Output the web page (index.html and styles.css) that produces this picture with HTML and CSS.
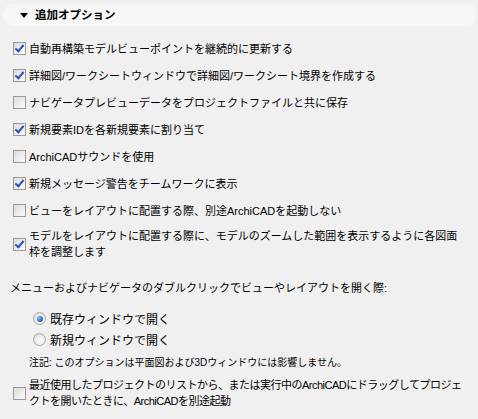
FILE: index.html
```html
<!DOCTYPE html>
<html lang="ja">
<head>
    <meta charset="UTF-8">
    <title>追加オプション</title>
    <link rel="stylesheet" href="styles.css">
</head>
<body>

<div class="panel">
    <div class="section-head">
        <span class="arrow"></span>
        <span class="section-title">追加オプション</span>
    </div>

    <div class="options">
        <label class="opt"><span class="box on"></span><span>自動再構築モデルビューポイントを継続的に更新する</span></label>
        <label class="opt"><span class="box on"></span><span>詳細図/ワークシートウィンドウで詳細図/ワークシート境界を作成する</span></label>
        <label class="opt"><span class="box"></span><span>ナビゲータプレビューデータをプロジェクトファイルと共に保存</span></label>
        <label class="opt"><span class="box on"></span><span>新規要素IDを各新規要素に割り当て</span></label>
        <label class="opt"><span class="box"></span><span>ArchiCADサウンドを使用</span></label>
        <label class="opt"><span class="box on"></span><span>新規メッセージ警告をチームワークに表示</span></label>
        <label class="opt"><span class="box"></span><span>ビューをレイアウトに配置する際、別途ArchiCADを起動しない</span></label>
        <label class="opt two"><span class="box on"></span><span>モデルをレイアウトに配置する際に、モデルのズームした範囲を表示するように各図面<br>枠を調整します</span></label>
    </div>

    <p class="group-label">メニューおよびナビゲータのダブルクリックでビューやレイアウトを開く際:</p>

    <div class="radios">
        <label class="radio-row"><span class="radio on"></span><span>既存ウィンドウで開く</span></label>
        <label class="radio-row"><span class="radio"></span><span>新規ウィンドウで開く</span></label>
    </div>
    <p class="note">注記: このオプションは平面図および3Dウィンドウには影響しません。</p>

    <label class="opt two last"><span class="box"></span><span class="tight">最近使用したプロジェクトのリストから、または実行中のArchiCADにドラッグしてプロジェ<br>クトを開いたときに、ArchiCADを別途起動</span></label>
</div>

</body>
</html>
```

FILE: styles.css
```css
body {
    margin: 0;
    background-color: #f0f0f0;
    font-family: "Liberation Sans", "Noto Sans CJK JP", sans-serif;
    font-size: 11px;
    color: #000;
}

.panel {
    padding-top: 4px;
}

.section-head {
    display: flex;
    align-items: center;
    height: 22px;
    margin-left: 3px;
    margin-right: 2px;
    background-color: #f7f7f7;
    border-radius: 11px 8px 8px 11px;
}

.arrow {
    width: 0;
    height: 0;
    margin-left: 17px;
    margin-right: 7px;
    border-left: 4px solid transparent;
    border-right: 4px solid transparent;
    border-top: 5px solid #000;
}

.section-title {
    font-size: 11.5px;
    font-weight: bold;
    line-height: 22px;
}

.options {
    display: flex;
    flex-direction: column;
    padding-top: 9px;
}

.opt {
    display: flex;
    align-items: center;
    height: 27px;
    padding-left: 13px;
    line-height: 16px;
    white-space: nowrap;
}

.opt.two {
    height: 40px;
}

.opt.last {
    margin-top: 3px;
}

.tight {
    letter-spacing: -0.5px;
}

.box {
    position: relative;
    flex: none;
    width: 11px;
    height: 11px;
    margin-right: 3px;
    border: 1px solid #9a9a9a;
    background: linear-gradient(135deg, #dcdcdc, #fafafa);
}

.box.on::after {
    content: "";
    position: absolute;
    left: 3px;
    top: 0px;
    width: 3px;
    height: 7px;
    border-right: 2px solid #2a4fc0;
    border-bottom: 2px solid #2a4fc0;
    transform: rotate(40deg);
}

.group-label {
    margin: 16px 0 0 10px;
    line-height: 16px;
}

.radios {
    display: flex;
    flex-direction: column;
    padding-top: 12px;
}

.radio-row {
    display: flex;
    align-items: center;
    height: 21px;
    padding-left: 33px;
    font-size: 12px;
}

.radio {
    flex: none;
    width: 11px;
    height: 11px;
    margin-right: 4px;
    border: 1px solid #a8a8a8;
    border-radius: 50%;
    background: radial-gradient(circle at 60% 60%, #ffffff, #d6d6d6);
    display: flex;
    align-items: center;
    justify-content: center;
}

.radio.on::after {
    content: "";
    width: 6px;
    height: 6px;
    border-radius: 50%;
    background: radial-gradient(circle at 35% 35%, #7fc0f5, #1a5fb4 70%, #0d3f86);
}

.note {
    margin: 6px 0 0 29px;
    font-size: 10px;
    line-height: 14px;
}
```
